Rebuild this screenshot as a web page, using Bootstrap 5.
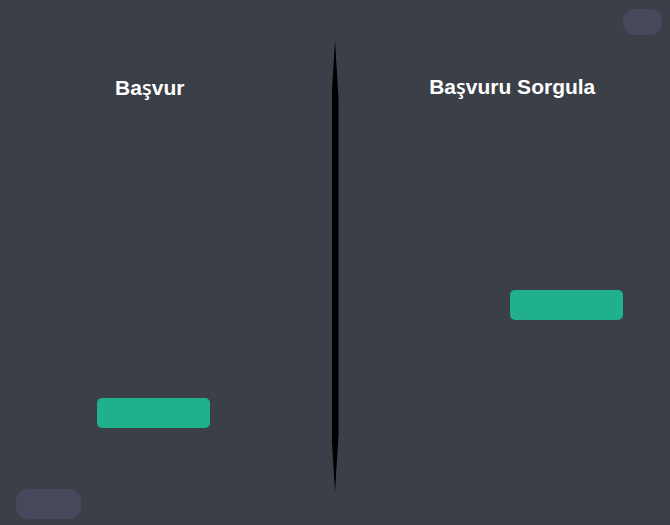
<!DOCTYPE html>
<html lang="tr">
<head>
<meta charset="utf-8">
<meta name="viewport" content="width=device-width, initial-scale=1">
<title>Başvuru</title>
<link href="https://cdn.jsdelivr.net/npm/bootstrap@5.3.0/dist/css/bootstrap.min.css" rel="stylesheet">
<style>
body { background: #3b3f47; color: #fff; font-family: "Liberation Sans", Arial, sans-serif; }
.panel-title { font-size: 21px; line-height: 24px; font-weight: 700; }
.panel-title span { font-family: "Open Sans", sans-serif; font-size: 20px; font-weight: 600; line-height: 1; }
.action-btn, .action-btn:hover { background: #20b08c; width: 113px; height: 30px; border: 0; border-radius: 5px; }
.pill-btn, .pill-btn:hover { background: #47485c; border: 0; border-radius: 12px; }
.pill-top { width: 39px; height: 26px; margin: 9px 8px 0 0; }
.pill-bottom { width: 65px; height: 30px; margin: 0 0 6px 16px; }
.apply-title { margin-top: 76px; padding-right: 32px; }
.apply-action { margin-top: 298px; padding-right: 24px; }
.query-title { margin-top: 40px; padding-left: 16px; }
.query-action { margin-top: 191px; padding-right: 47px; }
.divider { width: 7px; margin: 40px 0 33px; background: #000;
  clip-path: polygon(50% 0, 100% 58px, 100% calc(100% - 58px), 50% 100%, 0 calc(100% - 58px), 0 58px); }
</style>
<script src="https://cdn.jsdelivr.net/npm/bootstrap@5.3.0/dist/js/bootstrap.bundle.min.js" defer></script>
</head>
<body>
<main class="d-flex min-vh-100">
  <section class="d-flex flex-column flex-fill w-50" aria-labelledby="apply">
    <h2 id="apply" class="panel-title apply-title mb-0 text-center">Ba<span>ş</span>vur</h2>
    <div class="apply-action d-flex justify-content-center">
      <button type="button" class="btn action-btn" aria-labelledby="apply"></button>
    </div>
    <button type="button" class="btn pill-btn pill-bottom mt-auto align-self-start"></button>
  </section>
  <div class="divider flex-shrink-0"></div>
  <section class="d-flex flex-column flex-fill w-50" aria-labelledby="query">
    <button type="button" class="btn pill-btn pill-top align-self-end"></button>
    <h2 id="query" class="panel-title query-title mb-0 text-center">Ba<span>ş</span>vuru Sorgula</h2>
    <div class="query-action d-flex justify-content-end">
      <button type="button" class="btn action-btn" aria-labelledby="query"></button>
    </div>
  </section>
</main>
</body>
</html>
